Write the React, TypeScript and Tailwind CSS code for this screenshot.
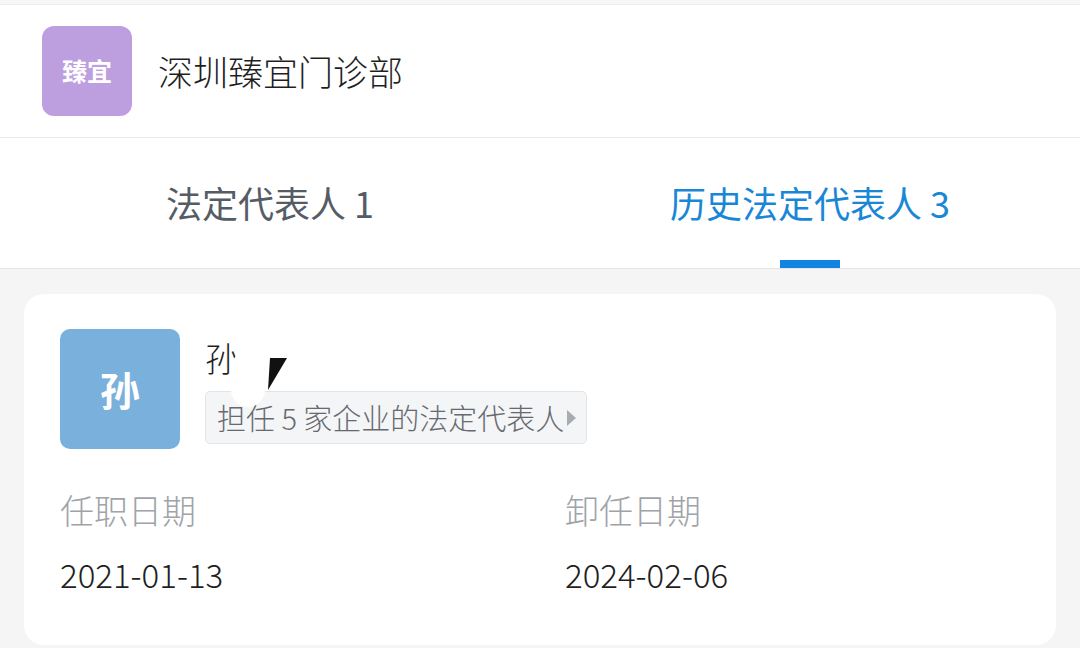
export default function App() {
  const font = { fontFamily: '"Noto Sans CJK SC", "Noto Sans", sans-serif' };

  return (
    <div className="w-[1080px] h-[648px] overflow-hidden bg-[#f5f5f5]" style={font}>
      <div className="h-[5px] bg-[#f7f7f7] border-b border-[#eeeeee]" />
      <div className="h-[133px] bg-white flex items-center pl-[42px] gap-[26px] border-b border-[#e8e8e8]">
        <div className="w-[90px] h-[90px] rounded-[12px] bg-[#bd9fdf] flex items-center justify-center text-white text-[25px] font-bold">
          臻宜
        </div>
        <div className="text-[35px] font-light text-[#1f1f1f] leading-none pb-[2px]">深圳臻宜门诊部</div>
      </div>

      <div className="h-[131px] bg-white flex border-b border-[#e3e3e3]">
        <div className="flex-1 flex items-center justify-center text-[36px] text-[#555c66] pb-[2px]">
          法定代表人 1
        </div>
        <div className="flex-1 relative flex items-center justify-center text-[36px] text-[#1a87d6] pb-[2px]">
          历史法定代表人 3
          <div className="absolute bottom-0 left-1/2 -translate-x-1/2 w-[60px] h-[8px] bg-[#1283e0]" />
        </div>
      </div>

      <div className="px-[24px] pt-[25px]">
        <div className="bg-white rounded-[20px] h-[351px] px-[36px] pt-[35px]">
          <div className="flex gap-[25px]">
            <div className="w-[120px] h-[120px] rounded-[10px] bg-[#7ab0dc] flex items-center justify-center text-white text-[40px] font-bold">
              孙
            </div>
            <div className="relative flex flex-col pt-[10px]">
              <div className="text-[34px] font-light text-[#1f1f1f] leading-none h-[50px] flex items-start pt-[2px]">孙</div>
              <div className="absolute left-[26px] top-[22px] w-[34px] h-[56px] rounded-full bg-white" />
              <svg className="absolute left-[63px] top-[29px]" width="20" height="32" viewBox="0 0 20 32">
                <polygon points="2,0 19,0 0,32" fill="#111" />
              </svg>
              <div className="mt-[2px] h-[53px] flex items-center gap-[3px] pl-[11px] pr-[10px] bg-[#f3f4f6]/90 border border-[#e3e4e6] rounded-[5px] text-[29px] font-light text-[#666a70]">
                担任 5 家企业的法定代表人
                <svg width="9" height="16" viewBox="0 0 9 16">
                  <polygon points="0,0 9,8 0,16" fill="#a8acb2" />
                </svg>
              </div>
            </div>
          </div>

          <div className="flex mt-[44px]">
            <div className="w-[505px] flex flex-col gap-[31px]">
              <div className="text-[34px] font-light text-[#a0a3a8] leading-none">任职日期</div>
              <div className="text-[33px] font-light text-[#1f1f1f] leading-none">2021-01-13</div>
            </div>
            <div className="flex flex-col gap-[31px]">
              <div className="text-[34px] font-light text-[#a0a3a8] leading-none">卸任日期</div>
              <div className="text-[33px] font-light text-[#1f1f1f] leading-none">2024-02-06</div>
            </div>
          </div>
        </div>
      </div>
    </div>
  );
}
